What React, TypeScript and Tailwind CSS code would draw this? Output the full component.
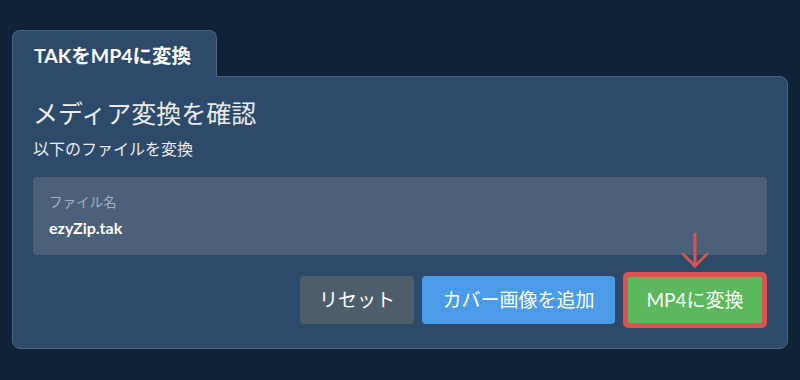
const font = "font-['Lato','Noto_Sans_CJK_JP',sans-serif]";

function ArrowDown() {
  return (
    <svg
      className="absolute left-1/2 top-[-40px] -translate-x-1/2"
      width="30"
      height="38"
      viewBox="0 0 30 38"
      fill="none"
      stroke="#d9534f"
      strokeWidth="3"
      strokeLinecap="round"
      strokeLinejoin="round"
    >
      <path d="M15 2 V34" />
      <path d="M3 22 L15 34 L27 22" />
    </svg>
  );
}

export default function App() {
  return (
    <main className={`h-[380px] w-[800px] bg-[#0f2237] pl-3 pt-[30px] text-[#ebebeb] ${font}`}>
      <div className="flex w-[776px] flex-col">
        <div className="relative z-10 -mb-px flex h-[47px] w-[205px] items-center rounded-t-lg border border-b-0 border-[#4a6482] bg-[#2d4a6a] pl-[21px] pt-1">
          <span className="text-[19.5px] font-bold text-white">TAKをMP4に変換</span>
        </div>
        <section className="rounded-b-lg rounded-tr-lg border border-[#4a6482] bg-[#2d4a6a] px-5 pb-5 pt-5">
          <h1 className="text-[25px] leading-8 font-normal">メディア変換を確認</h1>
          <p className="mt-[10px] text-[16px] leading-5">以下のファイルを変換</p>

          <div className="mt-[18px] rounded bg-[#4b6079] px-4 pt-4 pb-4">
            <div className="text-[13.5px] leading-[18px] text-[#a3afbd]">ファイル名</div>
            <div className="mt-[6px] text-[16px] leading-[22px] font-bold text-white">ezyZip.tak</div>
          </div>

          <div className="mt-[17px] flex items-center justify-end gap-2">
            <button className="flex h-12 w-[114px] items-center justify-center rounded bg-[#4e5d6c] text-[19px] text-white">
              リセット
            </button>
            <button className="flex h-12 w-[193px] items-center justify-center rounded bg-[#4c9be8] text-[19px] text-white">
              カバー画像を追加
            </button>
            <div className="relative">
              <ArrowDown />
              <button className="flex h-14 w-[144px] items-center justify-center rounded-[5px] border-[5px] border-[#d9534f] bg-[#5cb85c] text-[19px] text-white">
                MP4に変換
              </button>
            </div>
          </div>
        </section>
      </div>
    </main>
  );
}
